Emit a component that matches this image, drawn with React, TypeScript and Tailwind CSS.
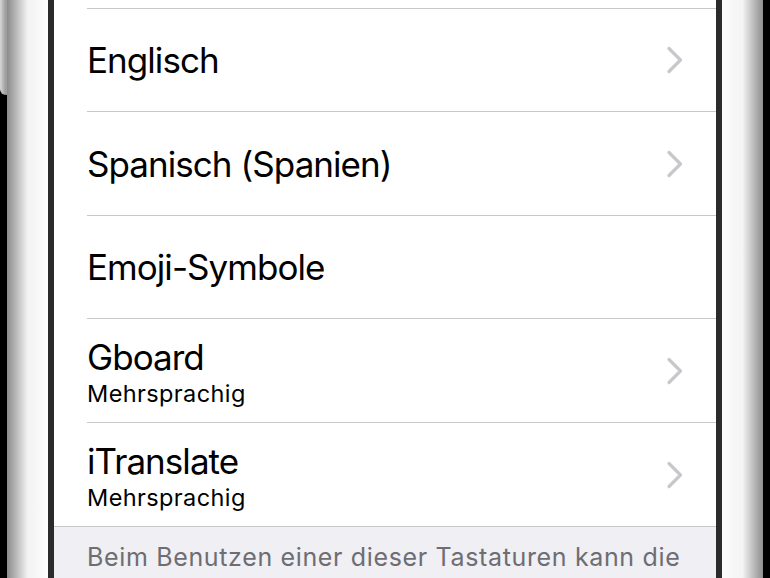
import React from "react";

function Chevron() {
  return (
    <svg width="18" height="28" viewBox="0 0 18 28" className="shrink-0">
      <path d="M3 2.5 L14.5 14 L3 25.5" fill="none" stroke="#c7c7cc" strokeWidth="3.2" strokeLinecap="round" strokeLinejoin="round" />
    </svg>
  );
}

type Row = { title: string; sub?: string; chevron: boolean; h: string };

const rows: Row[] = [
  { title: "Englisch", chevron: true, h: "h-[103px]" },
  { title: "Spanisch (Spanien)", chevron: true, h: "h-[104px]" },
  { title: "Emoji-Symbole", chevron: false, h: "h-[103px]" },
  { title: "Gboard", sub: "Mehrsprachig", chevron: true, h: "h-[104px]" },
  { title: "iTranslate", sub: "Mehrsprachig", chevron: true, h: "h-[104px]" },
];

export default function App() {
  return (
    <div
      className="w-[770px] h-[578px] overflow-hidden flex bg-black"
      style={{ fontFamily: "Inter, 'Noto Sans', sans-serif" }}
    >
      {/* left edge */}
      <div className="w-[7px] h-full flex flex-col bg-black">
        <div className="h-[95px] w-[12px] bg-gradient-to-r from-[#d8d8d8] via-[#9a9a9a] to-[#e8e8e8] rounded-b-[6px]" />
      </div>
      <div className="w-[41px] h-full bg-gradient-to-r from-[#8c8c8c] via-[#f2f2f2] to-[#fdfdfd]" />
      <div className="w-[6px] h-full bg-[#2b2b2b]" />

      {/* screen */}
      <div className="flex-1 h-full flex flex-col bg-white">
        <div className="h-[8px] shrink-0" />
        {rows.map((r, i) => (
          <div key={i} className={`${r.h} shrink-0 flex flex-col`}>
            <div className="h-px bg-[#c8c7cc] ml-[33px] shrink-0" />
            <div className="flex-1 flex items-center pl-[33px] pr-[32px]">
              <div className={`flex-1 flex flex-col ${r.sub ? "pt-[4px]" : ""}`}>
                <div className="text-[35px] leading-[40px] text-black tracking-[-0.95px]">{r.title}</div>
                {r.sub && (
                  <div className="text-[23.5px] leading-[30px] mt-[2px] text-black tracking-[0.4px]">{r.sub}</div>
                )}
              </div>
              {r.chevron && <Chevron />}
            </div>
          </div>
        ))}
        <div className="h-px bg-[#c8c7cc] shrink-0" />
        <div className="flex-1 bg-[#efeff4] pl-[33px] pt-[14px]">
          <div className="text-[25px] leading-[32px] text-[#6d6d72] tracking-[0.65px] whitespace-nowrap">
            Beim Benutzen einer dieser Tastaturen kann die
          </div>
        </div>
      </div>

      <div className="w-[6px] h-full bg-[#2b2b2b]" />
      <div className="w-[41px] h-full bg-gradient-to-r from-[#fbfbfb] via-[#f4f4f4] to-[#8e8e8e]" />
      <div className="w-[7px] h-full bg-black" />
    </div>
  );
}
